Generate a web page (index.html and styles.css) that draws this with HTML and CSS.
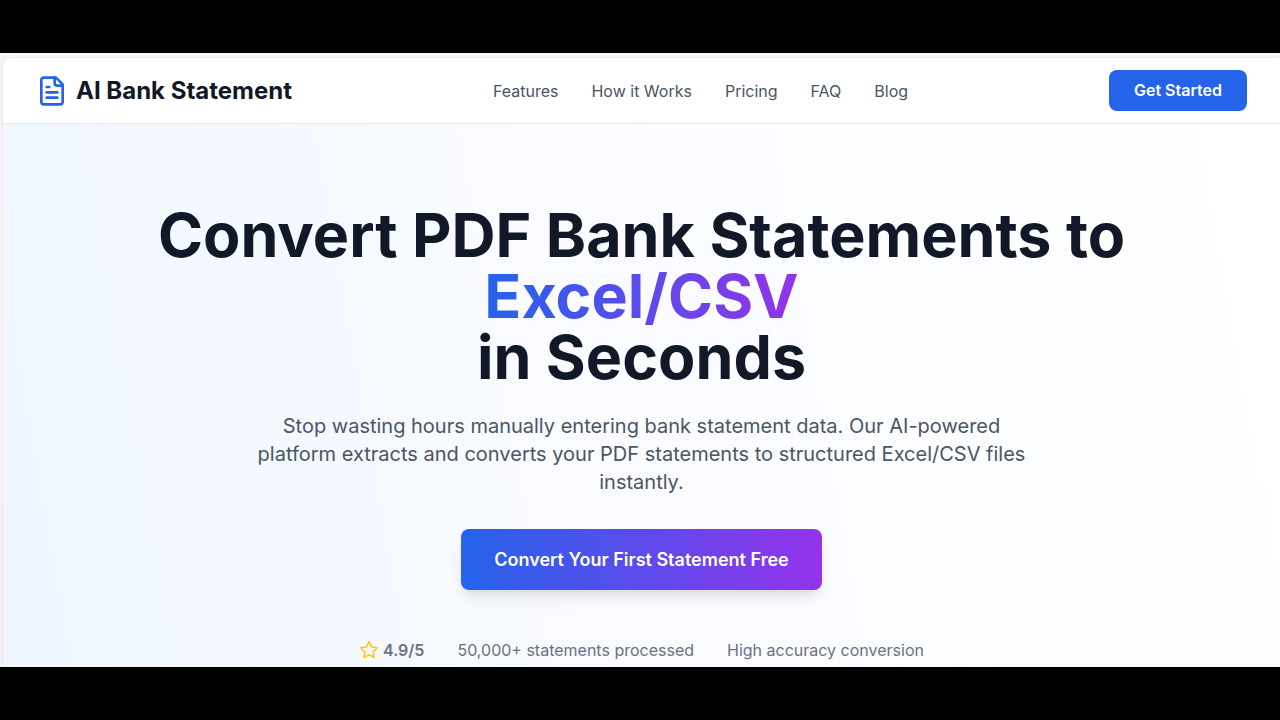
FILE: index.html
```html
<!DOCTYPE html>
<html lang="en">
<head>
  <meta charset="UTF-8">
  <meta name="viewport" content="width=device-width, initial-scale=1.0">
  <title>AI Bank Statement</title>
  <link rel="stylesheet" href="styles.css">
</head>
<body>

<div class="frame">
  <div class="page">
    <header class="header">
      <a class="logo" href="#">
        <svg class="logo-icon" viewBox="0 0 24 24" aria-hidden="true">
          <path d="M15 2H6a2 2 0 0 0-2 2v16a2 2 0 0 0 2 2h12a2 2 0 0 0 2-2V7Z"/>
          <path d="M14 2v4a2 2 0 0 0 2 2h4"/>
          <path d="M10 9H8"/>
          <path d="M16 13H8"/>
          <path d="M16 17H8"/>
        </svg>
        <span>AI Bank Statement</span>
      </a>
      <nav class="nav">
        <a href="#">Features</a>
        <a href="#">How it Works</a>
        <a href="#">Pricing</a>
        <a href="#">FAQ</a>
        <a href="#">Blog</a>
      </nav>
      <button class="start-btn" type="button">Get Started</button>
    </header>

    <main class="hero">
      <h1>Convert PDF Bank Statements to <span class="highlight">Excel/CSV</span><br>in Seconds</h1>
      <p class="subtitle">Stop wasting hours manually entering bank statement data. Our AI-powered platform extracts and converts your PDF statements to structured Excel/CSV files instantly.</p>
      <button class="convert-btn" type="button">Convert Your First Statement Free</button>
      <div class="stats">
        <div class="rating">
          <svg class="star" viewBox="0 0 24 24" aria-hidden="true">
            <path d="M12 2l3.09 6.26L22 9.27l-5 4.87 1.18 6.88L12 17.77l-6.18 3.25L7 14.14 2 9.27l6.91-1.01L12 2z"/>
          </svg>
          <strong>4.9/5</strong>
        </div>
        <span>50,000+ statements processed</span>
        <span>High accuracy conversion</span>
      </div>
    </main>
  </div>
</div>

</body>
</html>
```

FILE: styles.css
```css
* {
  box-sizing: border-box;
}
body {
  margin: 0;
  padding: 53px 0;
  min-height: 100vh;
  display: flex;
  background-color: #000000;
  font-family: Inter, "Liberation Sans", sans-serif;
  font-size: 16px;
  line-height: 24px;
}
.frame {
  flex: 1;
  display: flex;
  padding: 5px 0 0 3px;
  background-color: #f5f5f5;
}
.page {
  flex: 1;
  display: flex;
  flex-direction: column;
  border-radius: 8px 0 0 4px;
  overflow: hidden;
  background-color: #ffffff;
  box-shadow: 0 0 2px rgba(0, 0, 0, 0.15);
}
.header {
  display: flex;
  align-items: center;
  justify-content: space-between;
  padding: 12px 33px;
  border-bottom: 1px solid #e9ebef;
}
.logo {
  display: flex;
  align-items: center;
  gap: 8px;
  font-size: 24px;
  line-height: 32px;
  font-weight: 700;
  color: #111827;
  text-decoration: none;
}
.logo-icon {
  width: 32px;
  height: 32px;
  fill: none;
  stroke: #2563eb;
  stroke-width: 2;
  stroke-linecap: round;
  stroke-linejoin: round;
}
.nav {
  display: flex;
  gap: 33px;
}
.nav a {
  color: #4b5563;
  text-decoration: none;
}
button {
  border: none;
  border-radius: 8px;
  color: #ffffff;
  font-family: inherit;
  font-weight: 600;
  cursor: pointer;
}
.start-btn {
  padding: 8px 25px;
  background-color: #2563eb;
  font-size: 16px;
  line-height: 25px;
}
.hero {
  flex: 1;
  display: flex;
  flex-direction: column;
  align-items: center;
  padding: 81px 33px 4px;
  background: linear-gradient(80deg, #eff6ff, #f9fbff 45%, #ffffff);
  text-align: center;
}
h1 {
  max-width: 1040px;
  margin: 0 0 24px;
  font-size: 61px;
  line-height: 61px;
  font-weight: 700;
  color: #111827;
}
.highlight {
  background: linear-gradient(to right, #2563eb, #9333ea);
  -webkit-background-clip: text;
  background-clip: text;
  color: transparent;
}
.subtitle {
  max-width: 782px;
  margin: 0 0 33px;
  font-size: 20px;
  line-height: 28px;
  color: #4b5563;
}
.convert-btn {
  padding: 16px 33px;
  background: linear-gradient(to right, #2563eb, #9333ea);
  font-size: 18px;
  line-height: 29px;
  box-shadow: 0 10px 15px -3px rgba(0, 0, 0, 0.1), 0 4px 6px -4px rgba(0, 0, 0, 0.1);
}
.stats {
  display: flex;
  flex-wrap: wrap;
  justify-content: center;
  gap: 33px;
  margin-top: 48px;
  color: #6b7280;
}
.rating {
  display: flex;
  align-items: center;
  gap: 4px;
}
.rating strong {
  font-weight: 600;
}
.star {
  width: 20px;
  height: 20px;
  fill: none;
  stroke: #facc15;
  stroke-width: 2;
  stroke-linejoin: round;
}
```
